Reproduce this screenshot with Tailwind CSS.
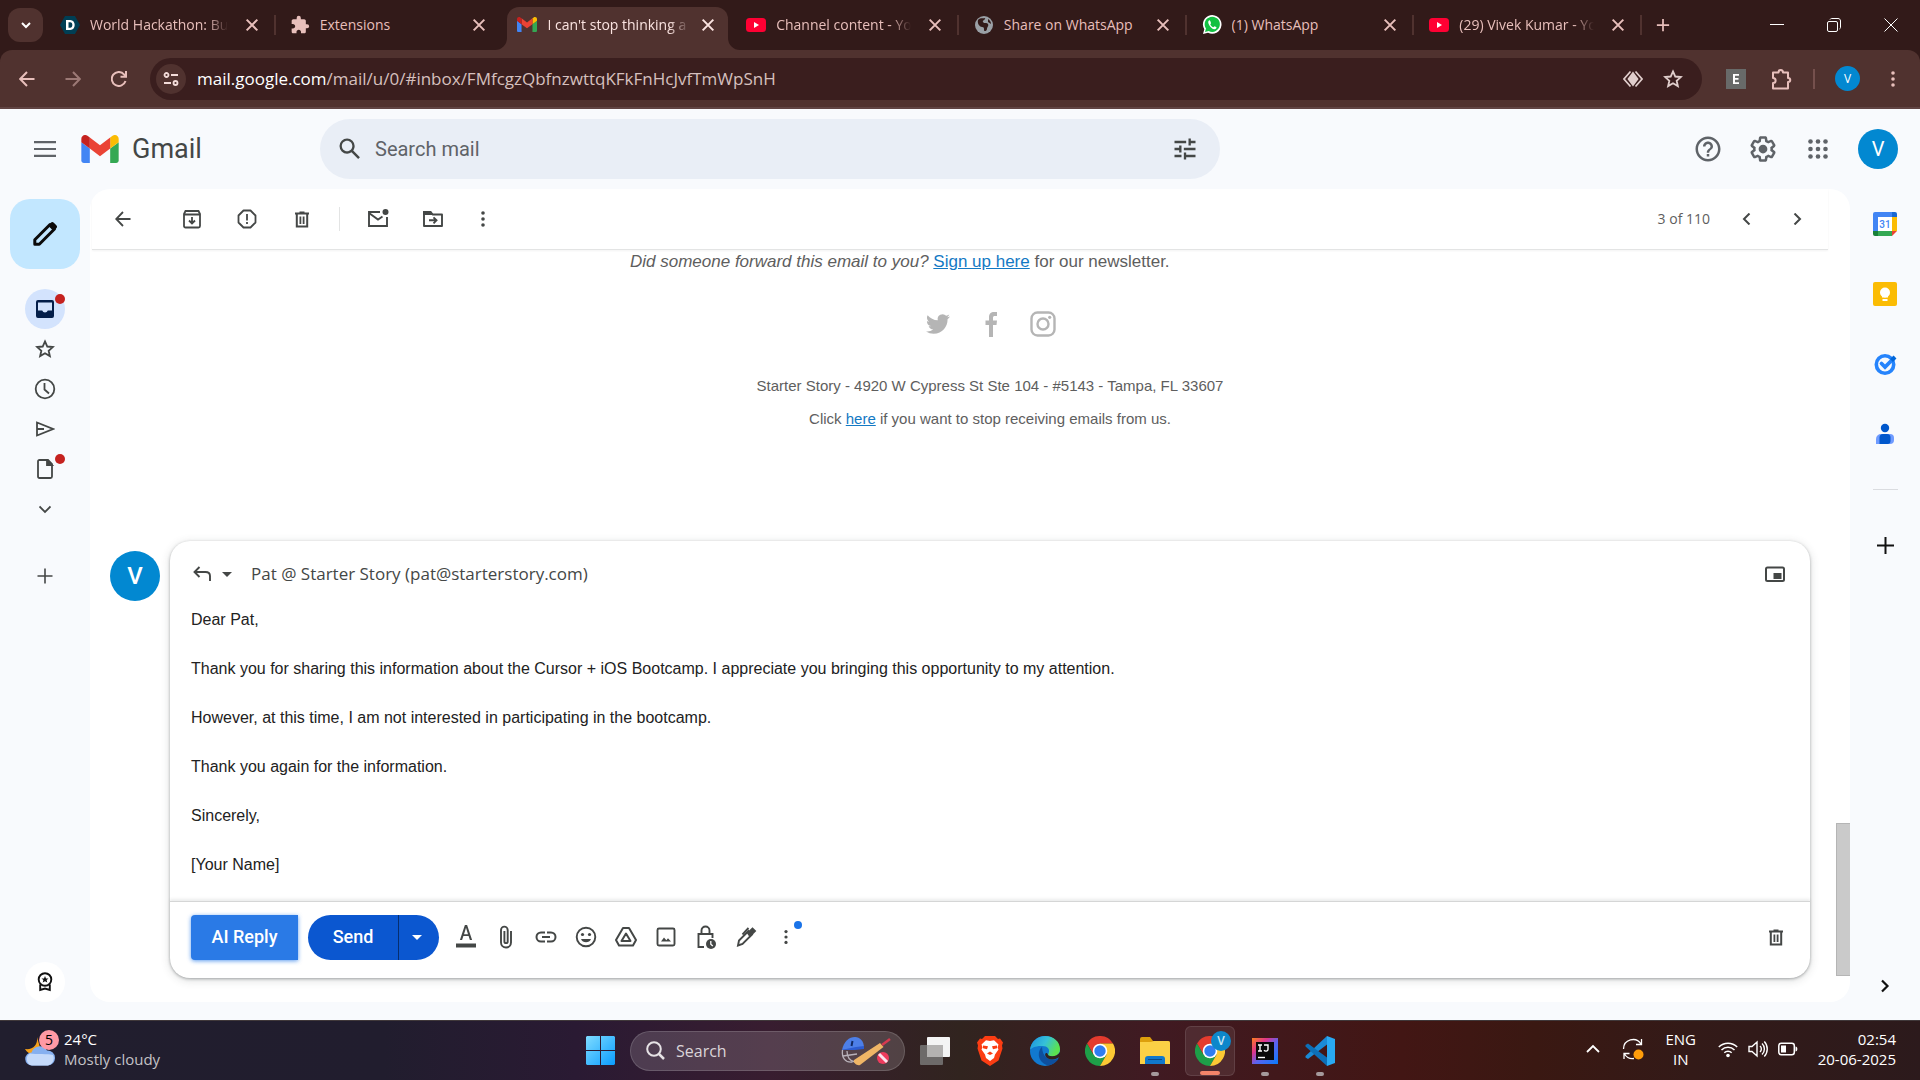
<!DOCTYPE html>
<html lang="en">
<head>
  <meta charset="UTF-8" />
  <title>I can't stop thinking about this - Gmail</title>
  <meta name="viewport" content="width=device-width, initial-scale=1.0" />
  <script src="https://cdn.jsdelivr.net/npm/@tailwindcss/browser@4"></script>
</head>
<body class="min-h-screen flex flex-col bg-[#f8fafd] font-['Open_Sans',sans-serif] overflow-x-hidden">

  <!-- Shared icons -->
  <svg class="hidden">
    <symbol id="i-close" viewBox="0 0 12 12"><path d="M2 2l8 8M10 2l-8 8" stroke="currentColor" stroke-width="1.5" fill="none" /></symbol>
    <symbol id="i-youtube" viewBox="0 0 20 20"><rect y="3" width="20" height="14" rx="3.5" fill="#ff0033" /><path d="M8 7v6l5-3z" fill="#fff" /></symbol>
    <symbol id="i-gmail" viewBox="52 42 88 66">
      <path fill="#4285f4" d="M58 108h14V74L52 59v43c0 3.32 2.69 6 6 6" />
      <path fill="#34a853" d="M120 108h14c3.32 0 6-2.69 6-6V59l-20 15" />
      <path fill="#fbbc04" d="M120 48v26l20-15v-8c0-7.42-8.47-11.65-14.4-7.2" />
      <path fill="#ea4335" d="M72 74V48l24 18 24-18v26L96 92" />
      <path fill="#c5221f" d="M52 51v8l20 15V48l-5.6-4.2c-5.94-4.45-14.4-.22-14.4 7.2" />
    </symbol>
    <symbol id="i-trash" viewBox="0 0 20 20">
      <path d="M3 4.5h14M7.5 3.5h5" stroke="currentColor" stroke-width="2" fill="none" />
      <path d="M4.8 5v12.5h10.4V5" stroke="currentColor" stroke-width="2" fill="none" />
      <path d="M8.4 7.5v7.5M11.6 7.5v7.5" stroke="currentColor" stroke-width="1.8" />
    </symbol>
    <symbol id="i-more" viewBox="0 0 20 20"><circle cx="10" cy="4" r="1.8" /><circle cx="10" cy="10" r="1.8" /><circle cx="10" cy="16" r="1.8" /></symbol>
    <symbol id="i-star" viewBox="0 0 24 24"><path d="M12 3.8l2.5 5.5 6 .6-4.500 4 1.300 5.900L12 16.700l-5.300 3.100L8 13.900l-4.500-4 6-.6z" fill="none" stroke="currentColor" stroke-width="2" /></symbol>
    <symbol id="i-chrome" viewBox="0 0 30 30">
      <path d="M2 7.500L8.500 18.700 15 7.500H28A15 15 0 0 0 2 7.500z" fill="#e33b2e" />
      <path d="M2 7.500A15 15 0 0 0 15 30l6.500-11.300H8.500z" fill="#1e9e48" />
      <path d="M28 7.500H15l6.500 11.200L15 30A15 15 0 0 0 28 7.500z" fill="#fcc934" />
      <circle cx="15" cy="15" r="7.300" fill="#fff" />
      <circle cx="15" cy="15" r="5.700" fill="#2f7df0" />
    </symbol>
  </svg>

  <!-- Tab strip -->
  <div class="h-[50px] flex items-center bg-[#321a19] text-[#e8bfbb] text-sm pl-2">
    <button aria-label="Search tabs" class="w-[35px] h-[34px] mr-[5px] rounded-xl bg-[#50322f] flex items-center justify-center shrink-0">
      <svg class="w-3 h-3" viewBox="0 0 12 12"><path d="M2 4l4 4 4-4" stroke="#fff" stroke-width="2" fill="none" /></svg>
    </button>
    <div class="grid grid-cols-7 flex-1 min-w-0 max-w-[1594px] h-full">
      <div class="min-w-0 flex items-center pl-3 relative">
        <svg class="w-5 h-5 shrink-0" viewBox="0 0 20 20"><path d="M5 1h10l5 9-5 9H5l-5-9z" fill="#003e54" /><path d="M6 5h4.200c6 0 6 10 0 10H6zM8.500 7.200v5.600h1.700c2.900 0 2.900-5.600 0-5.600z" fill="#fff" fill-rule="evenodd" /></svg>
        <span class="flex-1 min-w-0 ml-[10px] overflow-hidden whitespace-nowrap mask-r-from-85%">World Hackathon: Bui</span>
        <button aria-label="Close tab" class="mx-4 shrink-0"><svg class="w-4 h-4"><use href="#i-close" /></svg></button>
        <span class="absolute right-0 w-[2px] h-5 bg-[#50322f]"></span>
      </div>
      <div class="min-w-0 flex items-center pl-[14px] relative">
        <svg class="w-5 h-5 shrink-0" viewBox="0 0 24 24" fill="currentColor"><path d="M20.500 11H19V7c0-1.100-.9-2-2-2h-4V3.500a2.500 2.500 0 0 0-5 0V5H4c-1.100 0-2 .9-2 2v3.800h1.500c1.500 0 2.700 1.200 2.700 2.700S5 16.200 3.500 16.200H2V20c0 1.100.9 2 2 2h3.800v-1.500c0-1.500 1.200-2.700 2.700-2.700s2.700 1.200 2.700 2.700V22H17c1.100 0 2-.9 2-2v-4h1.500a2.500 2.500 0 0 0 0-5z" /></svg>
        <span class="flex-1 min-w-0 ml-[10px] overflow-hidden whitespace-nowrap">Extensions</span>
        <button aria-label="Close tab" class="mx-4 shrink-0"><svg class="w-4 h-4"><use href="#i-close" /></svg></button>
      </div>
      <div class="min-w-0 flex items-end pl-1 pr-[3px] h-full">
        <div class="relative h-[43px] w-full flex items-center pl-[10px] pb-2 rounded-t-xl bg-[#50322f] text-[#fbe4e1]">
          <svg class="absolute -left-3 bottom-0 w-3 h-3" viewBox="0 0 12 12"><path d="M12 0v12H0A12 12 0 0 0 12 0z" fill="#50322f" /></svg>
          <svg class="absolute -right-3 bottom-0 w-3 h-3" viewBox="0 0 12 12"><path d="M0 0v12h12A12 12 0 0 1 0 0z" fill="#50322f" /></svg>
          <svg class="w-5 h-[15px] shrink-0"><use href="#i-gmail" /></svg>
          <span class="flex-1 min-w-0 ml-[10px] overflow-hidden whitespace-nowrap mask-r-from-85%">I can't stop thinking a</span>
          <button aria-label="Close tab" class="ml-[10px] mr-3 shrink-0"><svg class="w-4 h-4"><use href="#i-close" /></svg></button>
        </div>
      </div>
      <div class="min-w-0 flex items-center pl-[15px] relative">
        <svg class="w-5 h-5 shrink-0"><use href="#i-youtube" /></svg>
        <span class="flex-1 min-w-0 ml-[10px] overflow-hidden whitespace-nowrap mask-r-from-85%">Channel content - Yo</span>
        <button aria-label="Close tab" class="mx-4 shrink-0"><svg class="w-4 h-4"><use href="#i-close" /></svg></button>
        <span class="absolute right-0 w-[2px] h-5 bg-[#50322f]"></span>
      </div>
      <div class="min-w-0 flex items-center pl-[15px] relative">
        <svg class="w-5 h-5 shrink-0" viewBox="0 0 20 20"><circle cx="10" cy="10" r="9" fill="#9aa0a6" /><path d="M4 5c3-3 5-1 7-2 1 2-3 2-2 4s4 0 5 2-1 3-1 5-3 3-3 1 0-3-2-3-5-3-4-7z" fill="#321a19" /><path d="M14 4c2 1 3 3 3 5l-3-2z" fill="#321a19" /></svg>
        <span class="flex-1 min-w-0 ml-[10px] overflow-hidden whitespace-nowrap">Share on WhatsApp</span>
        <button aria-label="Close tab" class="mx-4 shrink-0"><svg class="w-4 h-4"><use href="#i-close" /></svg></button>
        <span class="absolute right-0 w-[2px] h-5 bg-[#50322f]"></span>
      </div>
      <div class="min-w-0 flex items-center pl-[15px] relative">
        <svg class="w-5 h-5 shrink-0" viewBox="0 0 20 20"><path d="M1 19l1.300-4.700A9.300 9.300 0 1 1 6 17.700z" fill="#fff" /><path d="M3 17l1-3.400A7.600 7.600 0 1 1 6.700 16z" fill="#12c142" /><path d="M7 5.500c-2.500 1.500 1.500 8.500 5.500 8.800 1.500 0 2.600-1.600 1.700-2.200l-1.700-.9-1.200 1c-1.500-.4-2.700-1.900-3-2.900l.8-1.100-.8-2.200c-.3-.6-.9-.8-1.300-.5z" fill="#fff" /></svg>
        <span class="flex-1 min-w-0 ml-[10px] overflow-hidden whitespace-nowrap">(1) WhatsApp</span>
        <button aria-label="Close tab" class="mx-4 shrink-0"><svg class="w-4 h-4"><use href="#i-close" /></svg></button>
        <span class="absolute right-0 w-[2px] h-5 bg-[#50322f]"></span>
      </div>
      <div class="min-w-0 flex items-center pl-[15px] relative">
        <svg class="w-5 h-5 shrink-0"><use href="#i-youtube" /></svg>
        <span class="flex-1 min-w-0 ml-[10px] overflow-hidden whitespace-nowrap mask-r-from-85%">(29) Vivek Kumar - Yo</span>
        <button aria-label="Close tab" class="mx-4 shrink-0"><svg class="w-4 h-4"><use href="#i-close" /></svg></button>
        <span class="absolute right-0 w-[2px] h-5 bg-[#50322f]"></span>
      </div>
    </div>
    <button aria-label="New tab" class="w-[42px] flex justify-center shrink-0"><svg class="w-[14px] h-[14px]" viewBox="0 0 16 16"><path d="M8 1v14M1 8h14" stroke="currentColor" stroke-width="2" /></svg></button>
    <div class="ml-auto pr-[1px] flex shrink-0 h-full text-white">
      <button aria-label="Minimize" class="w-[57px] flex items-center justify-center"><svg class="w-[14px] h-[14px]" viewBox="0 0 14 14"><path d="M0 6.500h14" stroke="currentColor" /></svg></button>
      <button aria-label="Restore" class="w-[57px] flex items-center justify-center"><svg class="w-[14px] h-[14px]" viewBox="0 0 14 14" fill="none" stroke="currentColor"><rect x=".5" y="3.500" width="10" height="10" rx="1.500" /><path d="M3 1.500C3.300.9 4 .5 4.500.5h6.500c1.500 0 2.500 1 2.500 2.500v6.500c0 .6-.4 1.200-1 1.500" /></svg></button>
      <button aria-label="Close window" class="w-[57px] flex items-center justify-center"><svg class="w-[14px] h-[14px]" viewBox="0 0 14 14"><path d="M.5.5l13 13M13.500.5l-13 13" stroke="currentColor" /></svg></button>
    </div>
  </div>

  <!-- Address bar -->
  <div class="bg-[#321a19]">
    <div class="h-[59px] flex items-center rounded-t-xl bg-[#50322f] border-b-2 border-[#604443] pl-1 pr-[5px] text-[#e8bfbb]">
      <button aria-label="Back" class="w-[46px] flex justify-center"><svg class="w-4 h-4" viewBox="0 0 16 16" fill="none" stroke="currentColor" stroke-width="2"><path d="M15.500 8H1.500M8 1L1.200 8 8 15" /></svg></button>
      <button aria-label="Forward" class="w-[46px] flex justify-center opacity-50"><svg class="w-4 h-4" viewBox="0 0 16 16" fill="none" stroke="currentColor" stroke-width="2"><path d="M.5 8h14M8 1l6.800 7L8 15" /></svg></button>
      <button aria-label="Reload" class="w-[46px] flex justify-center"><svg class="w-4 h-4" viewBox="0 0 16 16" fill="none" stroke="currentColor" stroke-width="2"><path d="M14.500 10A7 7 0 1 1 13 3.300L15 5.500M15 0v5.800H9.500" /></svg></button>
      <div class="flex-1 min-w-0 h-[42px] ml-2 mr-[11px] pl-[6px] pr-[18px] rounded-full bg-[#3a1e1e] flex items-center">
        <button aria-label="View site information" class="w-[30px] h-[30px] rounded-full bg-[#50322f] flex items-center justify-center shrink-0">
          <svg class="w-4 h-4" viewBox="0 0 16 16" fill="none" stroke="#f3dcd9" stroke-width="1.800"><circle cx="3.500" cy="4" r="2" /><path d="M8 4h7M1 12h7" /><circle cx="12.500" cy="12" r="2" /></svg>
        </button>
        <div class="ml-[11px] flex-1 min-w-0 text-[17px] whitespace-nowrap overflow-hidden text-[#d6c0be]"><span class="text-white">mail.google.com</span>/mail/u/0/#inbox/FMfcgzQbfnzwttqKFkFnHcJvfTmWpSnH</div>
        <button aria-label="Page tools" class="mr-[19px]"><svg class="w-5 h-5" viewBox="0 0 20 20" fill="none" stroke="#e0cecc" stroke-width="1.700"><path d="M7.500 2.500L1 10l6.500 7.500M12.500 2.500L19 10l-6.500 7.500" /><path d="M10 4l4.500 6-4.500 6-4.500-6z" fill="#e0cecc" /></svg></button>
        <button aria-label="Bookmark this tab" class="text-[#e0cecc]"><svg class="w-[22px] h-[22px]"><use href="#i-star" /></svg></button>
      </div>
      <button aria-label="E extension" class="w-[45px] flex justify-center"><svg class="w-5 h-5" viewBox="0 0 20 20"><rect width="20" height="20" fill="#686a69" /><path d="M7 5h6v1.700H9v2.300h3.500v1.700H9v2.600h4V15H7z" fill="#fff" /></svg></button>
      <button aria-label="Extensions" class="w-[45px] flex justify-center"><svg class="w-6 h-6" viewBox="0 0 24 24" fill="none" stroke="currentColor" stroke-width="2"><path d="M4 5.500h5.500c0-3.500 4.500-3.500 4.500 0h5v5.500c3 0 3 4 0 4v6.500H4v-5.500c3.500 0 3.500-5 0-5z" stroke-linejoin="round" /></svg></button>
      <span class="w-[2px] h-5 mx-[10px] bg-[#75504d]"></span>
      <button aria-label="Profile" class="mx-[10px] w-[25px] h-[25px] rounded-full bg-[#0288d1] text-white text-xs flex items-center justify-center">V</button>
      <button aria-label="Chrome menu" class="w-[45px] flex justify-center"><svg class="w-5 h-5" fill="currentColor"><use href="#i-more" /></svg></button>
    </div>
  </div>

  <!-- Gmail header -->
  <header class="h-20 flex items-center pl-[33px] pr-[22px] font-[Roboto,sans-serif] text-[#5f6368]">
    <button aria-label="Main menu"><svg class="w-6 h-6" viewBox="0 0 24 24" fill="currentColor"><path d="M1 20h22v-2.200H1zM1 13.100h22v-2.200H1zM1 4v2.200h22V4z" /></svg></button>
    <a href="#inbox" class="ml-6 w-[239px] flex items-center">
      <svg class="w-[38px] h-7"><use href="#i-gmail" /></svg>
      <span class="ml-[13px] text-[27px] leading-8 text-[#444746]">Gmail</span>
    </a>
    <form class="w-[900px] min-w-0 h-[60px] rounded-full bg-[#e9eef6] flex items-center pl-4 pr-[21px]">
      <button type="button" aria-label="Search" class="text-[#444746]"><svg class="w-[28px] h-[28px]" viewBox="0 0 24 24" fill="currentColor"><path d="M20.490 19l-5.730-5.730C15.530 12.200 16 10.910 16 9.500A6.500 6.500 0 1 0 9.500 16c1.410 0 2.700-.47 3.770-1.240L19 20.490 20.490 19zM5 9.500C5 7.010 7.010 5 9.500 5S14 7.010 14 9.500 11.990 14 9.500 14 5 11.990 5 9.500z" /></svg></button>
      <input type="text" aria-label="Search mail" placeholder="Search mail" class="ml-[11px] flex-1 min-w-0 bg-transparent text-xl outline-none placeholder:text-[#5f6368]" />
      <button type="button" aria-label="Search options" class="text-[#444746]"><svg class="w-[28px] h-[28px]" viewBox="0 0 24 24" fill="currentColor"><path d="M3 17v2h6v-2H3zM3 5v2h10V5H3zm10 16v-2h8v-2h-8v-2h-2v6h2zM7 9v2H3v2h4v2h2V9H7zm14 4v-2H11v2h10zm-6-4h2V7h4V5h-4V3h-2v6z" /></svg></button>
    </form>
    <div class="ml-auto flex items-center">
      <button aria-label="Support" class="w-[55px] flex justify-center"><svg class="w-[30px] h-[30px]" viewBox="0 0 24 24" fill="currentColor"><path d="M11 18h2v-2h-2v2zm1-16C6.480 2 2 6.480 2 12s4.480 10 10 10 10-4.480 10-10S17.520 2 12 2zm0 18c-4.410 0-8-3.590-8-8s3.590-8 8-8 8 3.590 8 8-3.590 8-8 8zm0-14c-2.210 0-4 1.790-4 4h2c0-1.100.9-2 2-2s2 .9 2 2c0 2-3 1.750-3 5h2c0-2.250 3-2.500 3-5 0-2.210-1.790-4-4-4z" /></svg></button>
      <button aria-label="Settings" class="w-[55px] flex justify-center"><svg class="w-[30px] h-[30px]" viewBox="0 0 24 24" fill="currentColor"><path d="M13.850 22.250h-3.700c-.74 0-1.360-.54-1.450-1.270l-.27-1.890c-.27-.14-.53-.29-.79-.46l-1.800.72c-.7.26-1.470-.03-1.810-.65L2.200 15.530c-.35-.66-.2-1.440.36-1.880l1.530-1.190c-.01-.15-.02-.3-.02-.46 0-.15.01-.31.02-.46l-1.520-1.190c-.59-.45-.74-1.260-.37-1.880l1.850-3.190c.34-.62 1.110-.9 1.790-.63l1.810.73c.26-.17.52-.32.78-.46l.27-1.910c.09-.7.71-1.250 1.440-1.250h3.700c.74 0 1.360.54 1.450 1.270l.27 1.890c.27.14.53.29.79.46l1.800-.72c.71-.26 1.480.03 1.820.65l1.840 3.180c.36.66.2 1.440-.36 1.880l-1.520 1.190c.01.15.02.3.02.46s-.01.31-.02.46l1.520 1.190c.56.45.72 1.230.37 1.860l-1.860 3.220c-.34.62-1.110.9-1.800.63l-1.800-.72c-.26.17-.52.32-.78.46l-.27 1.910c-.1.680-.72 1.220-1.460 1.220zm-3.230-2h2.760l.37-2.550.53-.22c.44-.18.88-.44 1.340-.78l.45-.34 2.380.96 1.380-2.400-2.030-1.580.07-.56c.03-.26.06-.51.06-.78s-.03-.53-.06-.78l-.07-.56 2.030-1.580-1.390-2.400-2.390.96-.45-.35c-.42-.32-.87-.58-1.330-.77l-.52-.22-.37-2.550h-2.760l-.37 2.550-.53.21c-.44.19-.88.44-1.340.79l-.45.33-2.380-.95-1.390 2.390 2.030 1.580-.07.56a7 7 0 0 0-.06.79c0 .26.02.53.06.78l.07.56-2.030 1.580 1.380 2.400 2.390-.96.45.35c.43.33.86.58 1.330.77l.53.22.38 2.550z" /><circle cx="12" cy="12" r="3.500" /></svg></button>
      <button aria-label="Google apps" class="w-[55px] flex justify-center"><svg class="w-[20px] h-[20px]" viewBox="0 0 20 20" fill="currentColor"><circle cx="2.500" cy="2.500" r="2.300" /><circle cx="10" cy="2.500" r="2.300" /><circle cx="17.500" cy="2.500" r="2.300" /><circle cx="2.500" cy="10" r="2.300" /><circle cx="10" cy="10" r="2.300" /><circle cx="17.500" cy="10" r="2.300" /><circle cx="2.500" cy="17.500" r="2.300" /><circle cx="10" cy="17.500" r="2.300" /><circle cx="17.500" cy="17.500" r="2.300" /></svg></button>
      <button aria-label="Google Account" class="ml-[13px] w-10 h-10 rounded-full bg-[#0288d1] text-white text-xl flex items-center justify-center">V</button>
    </div>
  </header>

  <div class="flex-1 flex pb-[18px]">
    <!-- Left rail -->
    <nav class="w-[90px] shrink-0 flex flex-col items-center pt-[10px] text-[#444746]">
      <button aria-label="Compose" class="w-[70px] h-[70px] rounded-[20px] bg-[#c2e7ff] flex items-center justify-center">
        <svg class="w-[26px] h-[26px]" viewBox="0 0 26 26" fill="none" stroke="#0b0b0b" stroke-width="3"><path d="M2.800 23.200v-4.500L18 3.500l4.500 4.500L7.300 23.200z" stroke-linejoin="round" /><path d="M16 4.500l2.800-2.800c1-1 2-1 3 0l2.500 2.500c1 1 1 2 0 3L21.500 10z" fill="#0b0b0b" stroke="none" /></svg>
      </button>
      <a href="#inbox" aria-label="Inbox" class="relative mt-5 w-10 h-10 rounded-full bg-[#d3e3fd] flex items-center justify-center">
        <svg class="w-5 h-5" viewBox="0 0 20 20"><path d="M3 1h14a2 2 0 0 1 2 2v14a2 2 0 0 1-2 2H3a2 2 0 0 1-2-2V3a2 2 0 0 1 2-2zm0 2.500v8h4.200a3 3 0 0 0 5.600 0H17v-8z" fill="#041e49" fill-rule="evenodd" /></svg>
        <span class="absolute right-0 top-[5px] w-[10px] h-[10px] rounded-full bg-[#c5221f]"></span>
      </a>
      <a href="#starred" aria-label="Starred" class="w-10 h-10 flex items-center justify-center"><svg class="w-[22px] h-[22px]"><use href="#i-star" /></svg></a>
      <a href="#snoozed" aria-label="Snoozed" class="w-10 h-10 flex items-center justify-center"><svg class="w-[22px] h-[22px]" viewBox="0 0 22 22" fill="none" stroke="currentColor" stroke-width="1.800"><circle cx="11" cy="11" r="9.300" /><path d="M10.500 5v6.500l4.500 4" /></svg></a>
      <a href="#sent" aria-label="Sent" class="w-10 h-10 flex items-center justify-center"><svg class="w-5 h-5" viewBox="0 0 20 20" fill="none" stroke="currentColor" stroke-width="1.800"><path d="M2 3.500v13L18 10zM2 10h7" /></svg></a>
      <a href="#drafts" aria-label="Drafts" class="relative w-10 h-10 flex items-center justify-center"><svg class="w-5 h-5" viewBox="0 0 20 20" fill="none" stroke="currentColor" stroke-width="1.800"><path d="M4.500 1h8.500l4 4v12.500c0 1-.5 1.500-1.500 1.500h-11C3.500 19 3 18.500 3 17.500v-15C3 1.500 3.500 1 4.500 1z" /><path d="M12 1v5h5z" fill="currentColor" /></svg>
        <span class="absolute right-0 top-[5px] w-[10px] h-[10px] rounded-full bg-[#c5221f]"></span>
      </a>
      <button aria-label="More" class="w-10 h-10 flex items-center justify-center"><svg class="w-3 h-3" viewBox="0 0 12 12"><path d="M0.500 3.500L6 9l5.500-5.500" fill="none" stroke="currentColor" stroke-width="1.800" /></svg></button>
      <button aria-label="Create label" class="mt-[27px] w-10 h-10 flex items-center justify-center"><svg class="w-4 h-4" viewBox="0 0 16 16"><path d="M8 .5v15M.5 8h15" stroke="currentColor" stroke-width="1.600" /></svg></button>
      <button aria-label="Achievements" class="mt-auto w-10 h-10 rounded-full bg-white flex items-center justify-center"><svg class="w-5 h-5" viewBox="0 0 20 20" fill="none" stroke="#111" stroke-width="1.900"><circle cx="10" cy="7.500" r="6.300" /><path d="M5.200 12.500V18l4.800-1.500 4.800 1.500v-5.500" /><path d="M10 4l1 2.400 2.500.1-1.900 1.600.7 2.500-2.300-1.400-2.300 1.400.7-2.500-1.900-1.600 2.500-.1z" fill="#111" stroke="none" /></svg></button>
    </nav>

    <!-- Message card -->
    <main class="flex-1 min-w-0 rounded-[20px] bg-white flex flex-col overflow-hidden text-[#444746]">
      <div class="h-[61px] ml-[2px] mr-[22px] pl-2 pr-[6px] flex items-center border-b border-[#e3e4e4] shadow-xs">
        <button aria-label="Back to Inbox" class="w-[46px] flex justify-center"><svg class="w-4 h-4" viewBox="0 0 16 16" fill="none" stroke="currentColor" stroke-width="1.800"><path d="M15.500 8H1.500M8 1L1.200 8 8 15" /></svg></button>
        <div class="ml-[18px] flex items-center">
          <button aria-label="Archive" class="w-[55px] flex justify-center"><svg class="w-5 h-5" viewBox="0 0 20 20" fill="none" stroke="currentColor" stroke-width="1.800"><path d="M2 5l1.500-3h13L18 5v12a1.500 1.500 0 0 1-1.500 1.500h-13A1.500 1.500 0 0 1 2 17zM2 5.500h16" /><path d="M10 8v6M7 11.500l3 3 3-3" /></svg></button>
          <button aria-label="Report spam" class="w-[55px] flex justify-center"><svg class="w-5 h-5" viewBox="0 0 20 20" fill="none" stroke="currentColor" stroke-width="1.800"><path d="M6.500 1.500h7l5 5v7l-5 5h-7l-5-5v-7z" stroke-linejoin="round" /><path d="M10 5v6.500M10 13v2" /></svg></button>
          <button aria-label="Delete" class="w-[55px] flex justify-center"><svg class="w-5 h-5"><use href="#i-trash" /></svg></button>
          <span class="mx-[10px] w-px h-6 bg-[#e3e4e4]"></span>
          <button aria-label="Mark as unread" class="w-[55px] flex justify-center"><svg class="w-[22px] h-5" viewBox="0 0 22 20" fill="none" stroke="currentColor" stroke-width="1.900"><path d="M13 3H2v14h18V8" /><path d="M2 4l9 6.500 4.500-3" /><circle cx="18.500" cy="3" r="3" fill="currentColor" stroke="none" /></svg></button>
          <button aria-label="Move to" class="w-[55px] flex justify-center"><svg class="w-[22px] h-5" viewBox="0 0 22 20" fill="none" stroke="currentColor" stroke-width="1.900"><path d="M2 3h6.500l2 2.500H20V17H2z" stroke-linejoin="round" /><path d="M2 3h6.500l1.500 2H2z" fill="currentColor" /><path d="M7 11.300h7M11.500 8.300l3 3-3 3" /></svg></button>
          <button aria-label="More options" class="w-[45px] flex justify-center"><svg class="w-5 h-5" fill="currentColor"><use href="#i-more" /></svg></button>
        </div>
        <div class="ml-auto flex items-center text-sm text-[#5e5e5e]">
          <span class="mr-3">3 of 110</span>
          <button aria-label="Newer" class="w-[50px] flex justify-center"><svg class="w-3 h-3" viewBox="0 0 12 12"><path d="M8.500.5L3 6l5.500 5.500" fill="none" stroke="#444746" stroke-width="2" /></svg></button>
          <button aria-label="Older" class="w-[50px] flex justify-center"><svg class="w-3 h-3" viewBox="0 0 12 12"><path d="M3.500.5L9 6l-5.500 5.500" fill="none" stroke="#444746" stroke-width="2" /></svg></button>
        </div>
      </div>

      <div class="flex-1 flex">
        <div class="flex-1 min-w-0 pl-5 pr-[26px] pb-6 flex flex-col">
          <!-- Newsletter footer -->
          <div class="pl-[60px] pr-0 flex-1 font-['Liberation_Sans',sans-serif] text-[15px] text-[#5e5e5e]">
            <div class="w-[730px] mx-auto">
              <p class="pl-[5px] text-[17px] leading-6"><em>Did someone forward this email to you?</em> <a href="#signup" class="underline text-[#1379c4]">Sign up here</a> for our newsletter.</p>
              <div class="mt-[36px] flex justify-center gap-[25px] h-[28px] items-center text-[#b5b5b5]">
                <a href="#twitter" aria-label="Twitter"><svg class="w-[28px] h-[24px]" viewBox="0 0 24 24" fill="currentColor"><path d="M23.953 4.570a10 10 0 01-2.825.775 4.958 4.958 0 002.163-2.723c-.951.555-2.005.959-3.127 1.184a4.920 4.920 0 00-8.384 4.482C7.690 8.095 4.067 6.130 1.640 3.162a4.822 4.822 0 00-.666 2.475c0 1.710.87 3.213 2.188 4.096a4.904 4.904 0 01-2.228-.616v.06a4.923 4.923 0 003.946 4.827 4.996 4.996 0 01-2.212.085 4.936 4.936 0 004.604 3.417 9.867 9.867 0 01-6.102 2.105c-.39 0-.779-.023-1.170-.067a13.995 13.995 0 007.557 2.209c9.053 0 13.998-7.496 13.998-13.985 0-.21 0-.42-.015-.63A9.935 9.935 0 0024 4.590z" /></svg></a>
                <a href="#facebook" aria-label="Facebook"><svg class="w-[28px] h-[26px]" viewBox="0 0 26 26" fill="currentColor"><path d="M11 26V14H7.500v-4.500H11V6.500C11 2.500 13 1 16 1h3v4h-2c-1.500 0-2 .5-2 2v2.500h4l-.5 4.500H15v12z" /></svg></a>
                <a href="#instagram" aria-label="Instagram"><svg class="w-[26px] h-[26px]" viewBox="0 0 26 26" fill="none" stroke="currentColor" stroke-width="2.400"><rect x="1.500" y="1.500" width="23" height="23" rx="6" /><circle cx="13" cy="13" r="5.500" /><circle cx="19.700" cy="6.300" r="1.600" fill="currentColor" stroke="none" /></svg></a>
              </div>
              <p class="mt-[31px] leading-[33px] text-center">Starter Story - 4920 W Cypress St Ste 104 - #5143 - Tampa, FL 33607</p>
              <p class="leading-[33px] text-center">Click <a href="#unsubscribe" class="underline text-[#1379c4]">here</a> if you want to stop receiving emails from us.</p>
            </div>
          </div>

          <!-- Reply -->
          <div class="flex items-start gap-[10px]">
            <div class="mt-[10px] w-[50px] h-[50px] rounded-full bg-[#0288d1] text-white text-2xl font-medium font-[Roboto,sans-serif] flex items-center justify-center shrink-0">V</div>
            <div class="flex-1 min-w-0 rounded-[20px] bg-white shadow-[0_1px_3px_rgba(60,64,67,0.4),0_2px_8px_1px_rgba(60,64,67,0.15)] flex flex-col">
              <div class="h-[54px] pt-3 px-[22px] flex items-center">
                <button aria-label="Type of response" class="flex items-center gap-[10px]">
                  <svg class="w-5 h-5" viewBox="0 0 20 20" fill="none" stroke="currentColor" stroke-width="1.900"><path d="M7.500 3L2.500 8l5 5M2.500 8h11c3 0 4.500 1.500 4.500 4v5" /></svg>
                  <svg class="w-[10px] h-[5px]" viewBox="0 0 10 5"><path d="M0 0h10L5 5z" fill="#444746" /></svg>
                </button>
                <span class="ml-[19px] text-[17px] text-[#444746]">Pat @ Starter Story (pat@starterstory.com)</span>
                <button aria-label="Pop out reply" class="ml-auto"><svg class="w-[26px] h-5" viewBox="0 0 26 20"><rect x="4" y="3.500" width="18" height="13.500" rx="1.500" fill="none" stroke="currentColor" stroke-width="2" /><rect x="11.500" y="9" width="8" height="6" fill="currentColor" /></svg></button>
              </div>
              <textarea aria-label="Message body" rows="6" class="px-[21px] pb-3 resize-none overflow-hidden outline-none font-['Liberation_Sans',sans-serif] text-base leading-[49px] text-[#222]">Dear Pat,
Thank you for sharing this information about the Cursor + iOS Bootcamp. I appreciate you bringing this opportunity to my attention.
However, at this time, I am not interested in participating in the bootcamp.
Thank you again for the information.
Sincerely,
[Your Name]</textarea>
              <div class="h-[77px] pl-[21px] pr-[21px] pb-[6px] flex items-center rounded-b-[20px] border-t border-[#d5d6d6] shadow-[0_-2px_3px_rgba(60,64,67,0.1)] font-[Roboto,sans-serif]">
                <button class="w-[107px] h-[45px] rounded-l-[4px] bg-[#2a7ae6] text-white text-lg font-medium shadow-[0_1px_4px_rgba(26,115,232,0.7)]">AI Reply</button>
                <div class="ml-[10px] h-[45px] flex rounded-full overflow-hidden bg-[#0b57d0] text-white shrink-0">
                  <button class="w-[91px] border-r border-[#062e6f] text-lg font-medium">Send</button>
                  <button aria-label="More send options" class="w-10 pr-1 flex items-center justify-center"><svg class="w-[10px] h-[5px]" viewBox="0 0 10 5"><path d="M0 0h10L5 5z" fill="#fff" /></svg></button>
                </div>
                <div class="ml-[7px] flex">
                  <button aria-label="Formatting options" class="w-10 flex justify-center"><svg class="w-6 h-6" viewBox="0 0 24 24" fill="currentColor"><path d="M2 18.500h20V22.500H2z" /><path d="M10.900 0h2.200l5 15h-2.200l-1.300-4H9.400l-1.300 4H5.900zM12 2.800L10 9.200h4z" /></svg></button>
                  <button aria-label="Attach files" class="w-10 flex justify-center"><svg class="w-6 h-6" viewBox="0 0 24 24" fill="none" stroke="currentColor" stroke-width="1.900"><path d="M17 6v11.500a5 5 0 0 1-10 0V5a3.300 3.300 0 0 1 6.700 0v11.500a1.600 1.600 0 0 1-3.300 0V6" /></svg></button>
                  <button aria-label="Insert link" class="w-10 flex justify-center"><svg class="w-6 h-6" viewBox="0 0 24 24" fill="none" stroke="currentColor" stroke-width="2"><path d="M11 7.500H7a4.500 4.500 0 0 0 0 9h4M13 7.500h4a4.500 4.500 0 0 1 0 9h-4M8 12h8" /></svg></button>
                  <button aria-label="Insert emoji" class="w-10 flex justify-center"><svg class="w-6 h-6" viewBox="0 0 24 24" fill="none" stroke="currentColor" stroke-width="1.900"><circle cx="12" cy="12" r="9.300" /><circle cx="8.500" cy="9.500" r="1.600" fill="currentColor" stroke="none" /><circle cx="15.500" cy="9.500" r="1.600" fill="currentColor" stroke="none" /><path d="M7 14h10c-1.500 4.300-8.500 4.300-10 0z" fill="currentColor" stroke="none" /></svg></button>
                  <button aria-label="Insert files using Drive" class="w-10 flex justify-center"><svg class="w-6 h-6" viewBox="0 0 24 24" fill="none" stroke="currentColor" stroke-width="2" stroke-linejoin="round"><path d="M9 3h6l7 12-3 5.500H5L2 15z" /><path d="M12 8.500l4.500 7.500h-9z" /></svg></button>
                  <button aria-label="Insert photo" class="w-10 flex justify-center"><svg class="w-6 h-6" viewBox="0 0 24 24" fill="none" stroke="currentColor" stroke-width="1.900"><rect x="3.500" y="3.500" width="17" height="17" rx="1.500" /><path d="M7 16.500l3-4 2.300 2.700 1.700-2 3 3.300z" fill="currentColor" stroke="none" /></svg></button>
                  <button aria-label="Confidential mode" class="w-10 flex justify-center"><svg class="w-6 h-6" viewBox="0 0 24 24" fill="none" stroke="currentColor" stroke-width="1.900"><path d="M10 22H4.500V9h14v4M7.500 9V5.500a4 4 0 0 1 8 0V9" /><circle cx="17" cy="19" r="5" fill="currentColor" stroke="none" /><path d="M16.800 16v3.200l2 1.800" stroke="#fff" stroke-width="1.300" /></svg></button>
                  <button aria-label="Insert signature" class="w-10 flex justify-center"><svg class="w-6 h-6" viewBox="0 0 24 24" fill="none" stroke="currentColor" stroke-width="1.900"><path d="M4 20.500l1-5L14.500 6l3.500 3.500-9.500 9.500z" /><path d="M14 8l4.500-4.500 2.500 2.500-5 5z" fill="currentColor" /><path d="M8.500 9.500l6-6.500" /></svg></button>
                  <button aria-label="More options" class="relative w-10 flex justify-center items-center"><svg class="w-[18px] h-5" fill="currentColor"><use href="#i-more" /></svg><span class="absolute right-1 -top-1 w-2 h-2 rounded-full bg-[#1a73e8]"></span></button>
                </div>
                <button aria-label="Discard draft" class="ml-auto mr-[3px]"><svg class="w-5 h-5"><use href="#i-trash" /></svg></button>
              </div>
            </div>
          </div>
        </div>
        <!-- Scrollbar thumb -->
        <div class="w-[14px] shrink-0 flex flex-col justify-end pb-[26px]"><div class="h-[153px] bg-[#cacaca] border border-r-0 border-[#b5b5b5]"></div></div>
      </div>
    </main>

    <!-- Side panel -->
    <aside class="w-[70px] shrink-0 flex flex-col items-center">
      <button aria-label="Calendar" class="h-[70px]"><svg class="w-6 h-6" viewBox="0 0 24 24"><rect x="4" y="4" width="15" height="15" fill="#fff" /><path d="M2 0h17v5H5v14H0V2a2 2 0 0 1 2-2z" fill="#4285f4" /><path d="M19 0h3a2 2 0 0 1 2 2v3h-5z" fill="#1967d2" /><path d="M19 5h5v14h-5z" fill="#fbbc04" /><path d="M5 19h14v5H5z" fill="#34a853" /><path d="M0 19h5v5H2a2 2 0 0 1-2-2z" fill="#188038" /><path d="M19 19h5l-5 5z" fill="#ea4335" /><text x="12" y="15.500" text-anchor="middle" font-family="Roboto" font-size="10" font-weight="500" fill="#4285f4">31</text></svg></button>
      <button aria-label="Keep" class="h-[70px]"><svg class="w-6 h-6" viewBox="0 0 24 24"><rect width="24" height="24" rx="2" fill="#fbbc04" /><circle cx="12" cy="10.500" r="5" fill="#fff" /><path d="M9 13h6v2.500H9zM9.500 17h5v2h-5z" fill="#fff" /></svg></button>
      <button aria-label="Tasks" class="h-[70px]"><svg class="w-6 h-6" viewBox="0 0 24 24" fill="none"><circle cx="12" cy="12.500" r="8.700" stroke="#2684fc" stroke-width="3.600" /><path d="M8.500 11.500l3.500 3.500 8.500-8.500" stroke="#2684fc" stroke-width="3.800" stroke-linecap="round" /><path d="M18.500 8.500l3.500-3.500" stroke="#0066da" stroke-width="4" /></svg></button>
      <button aria-label="Contacts" class="h-[70px]"><svg class="w-6 h-6" viewBox="0 0 24 24"><circle cx="12" cy="6" r="4.200" fill="#0057cc" /><path d="M8 12h9a4 4 0 0 1 4 4v2a4 4 0 0 1-4 4H3v-5a5 5 0 0 1 5-5z" fill="#6f9bff" /><path d="M10 12h4a3.500 3.500 0 0 1 3.500 3.500V19a3 3 0 0 1-3 3H6.500v-6.500A3.500 3.500 0 0 1 10 12z" fill="#0057cc" /></svg></button>
      <span class="mt-5 w-[25px] h-px bg-[#dadce0]"></span>
      <button aria-label="Get add-ons" class="mt-[47px]"><svg class="w-[17px] h-[17px]" viewBox="0 0 17 17"><path d="M8.500 0v17M0 8.500h17" stroke="#111" stroke-width="2" /></svg></button>
      <button aria-label="Hide side panel" class="mt-auto mb-[9px]"><svg class="w-3 h-[14px]" viewBox="0 0 12 14"><path d="M3 1.500L8.500 7 3 12.500" fill="none" stroke="#111" stroke-width="2.200" /></svg></button>
    </aside>
  </div>

  <!-- Taskbar -->
  <footer class="h-[60px] grid grid-cols-[1fr_auto_1fr] items-center border-t border-[#40383a] text-white text-[15px] leading-5 bg-[linear-gradient(90deg,#211e2e_0%,#211d2e_20%,#2a1a33_30%,#381d30_40%,#31241f_50%,#401a22_60%,#421614_73%,#3a1812_80%,#331a18_88%,#2c1a1c_100%)]">
    <button class="pl-[25px] pb-1 flex items-center text-left">
      <span class="relative w-[30px] h-[36px] shrink-0">
        <svg class="w-[30px] h-[36px]" viewBox="0 0 30 36"><path d="M12 6c1 8-4 13-12 12 3 6 12 7 16 2z" fill="#f7a11a" /><path d="M7 34.500a6.500 6.500 0 0 1-.5-13A8.500 8.500 0 0 1 22 19.500a7.500 7.500 0 0 1 1 15z" fill="#86b0f0" /><path d="M7 34.500A6.500 6.500 0 0 1 5 22.500c6 1 18 0 23 1.500a7.500 7.500 0 0 1-5 10.500z" fill="#c5dafa" /></svg>
        <span class="absolute left-[14px] -top-px w-5 h-5 rounded-full bg-[#ff99a4] text-black text-sm leading-5 text-center">5</span>
      </span>
      <span class="ml-[9px]"><span class="block">24°C</span><span class="block text-[#c4c2c6]">Mostly cloudy</span></span>
    </button>

    <div class="flex items-center gap-[5px] h-full">
      <button aria-label="Start" class="w-[50px] flex justify-center"><svg class="w-[29px] h-[29px]" viewBox="0 0 29 29"><defs><linearGradient id="win" x2="1" y2="1"><stop stop-color="#7fdcff" /><stop offset="1" stop-color="#0a9cff" /></linearGradient></defs><path d="M1 0h13v14H0V1zM15 0h13l1 1v13H15zM0 15h14v14H1l-1-1zM15 15h14v13l-1 1H15z" fill="url(#win)" /></svg></button>
      <button class="w-[275px] h-10 pl-[15px] pr-[13px] rounded-full bg-white/15 border border-white/15 flex items-center text-base text-[#dad4d8]">
        <svg class="w-[19px] h-[19px]" viewBox="0 0 19 19" fill="none" stroke="#e6e2e5" stroke-width="2"><circle cx="8" cy="8" r="6.800" /><path d="M13 13l5 5" stroke-width="2.500" /></svg>
        <span class="ml-[11px]">Search</span>
        <svg class="ml-auto w-[50px] h-[30px]" viewBox="0 0 50 30"><path d="M1.500 14c-1 8 3 13 10 12M2 20l14-2M6 15c0 6 3 10 8 11" fill="none" stroke="#b9b2ba" stroke-width="1.300" /><path d="M1 14C3 5 8 1 14 1c5 0 9 4 9 11l-9 1z" fill="#4d7fe8" /><path d="M0 14l15-3 8-1v3l-9 1z" fill="#2c5bd0" /><path d="M11.500 5l-1 5" stroke="#122a66" stroke-width="2" /><path d="M13 24L39 7l3.500 4L19 29c-3 1-7-2-6-5z" fill="#efb566" /><path d="M41 9l8-6" stroke="#d63a50" stroke-width="2.500" /><circle cx="42" cy="22" r="6" fill="#ee3b5d" /><path d="M38 18l8 8" stroke="#fbe3ee" stroke-width="3" /></svg>
      </button>
      <button aria-label="Task view" class="w-[50px] flex justify-center"><svg class="w-[30px] h-[28px]" viewBox="0 0 30 28"><rect x="7" width="23" height="20" rx="1" fill="#f4f4f4" /><rect y="8" width="23" height="20" rx="1" fill="#6d6a69" /><path d="M7 8h16v12H7z" fill="#b4b2b1" /></svg></button>
      <button aria-label="Brave" class="w-[50px] flex justify-center"><svg class="w-[26px] h-[30px]" viewBox="0 0 26 30"><path d="M8 0h10l3 3 2-.5 3 4-1 3 .5 3-4 12L13 30 4.500 24.500l-4-12L1 9.500 0 6.500l3-4 2 .5z" fill="#fb3d13" /><path d="M13 5l4-.8 4.500 4.300-1 3 1 2-3.500 5-1 3.500-4 3-4-3-1-3.500-3.500-5 1-2-1-3L9 4.200z" fill="#fff" /><path d="M6 9.500l5 .8-1 3-4-1zM20 9.500l-5 .8 1 3 4-1zM10 17.500l3-2 3 2-3 1.500z" fill="#fb3d13" /></svg></button>
      <button aria-label="Edge" class="w-[50px] flex justify-center"><svg class="w-[30px] h-[30px]" viewBox="0 0 30 30"><defs><linearGradient id="edge" x2="1" y2=".4"><stop stop-color="#1b8fe0" /><stop offset=".55" stop-color="#35c1d8" /><stop offset="1" stop-color="#5be24f" /></linearGradient></defs><circle cx="15" cy="15" r="15" fill="#1179cf" /><path d="M0 14C1 5 8 0 15 0c9 0 15 6 15 13 0 5-4 8-8.500 7.500-3-.3-4-1.500-3-3 2-4-1-7.500-6-7.500C6 9.500 1 12 0 14z" fill="url(#edge)" /><path d="M12 11c-5 4-5 16 7 18.500C24 28 27 25.500 29 22c-4 3-16 4-17-11z" fill="#0d4f9e" /><path d="M17 17c-3-1-3 6 5 6.500 4 0 6-1.500 8-3.500v-4c-2 4-8 5-11.500 3.500z" fill="#32231f" /></svg></button>
      <button aria-label="Chrome" class="w-[50px] flex justify-center"><svg class="w-[30px] h-[30px]"><use href="#i-chrome" /></svg></button>
      <button aria-label="File Explorer" class="relative w-[50px] h-[50px] flex items-center justify-center"><svg class="w-[30px] h-[27px]" viewBox="0 0 30 27"><path d="M0 2a2 2 0 0 1 2-2h8l3 4h15a2 2 0 0 1 2 2v3H0z" fill="#dd9f0c" /><path d="M0 5h11l3-1h14a2 2 0 0 1 2 2v21H0z" fill="#fbd045" /><path d="M5 27v-5a3 3 0 0 1 3-3h14a3 3 0 0 1 3 3v5z" fill="#1078cb" /><path d="M8 22.500h14" stroke="#0b4a86" /></svg><span class="absolute bottom-0 w-2 h-1 rounded-full bg-[#a59a9c]"></span></button>
      <button aria-label="Chrome, running" class="relative w-[50px] h-[50px] rounded-md bg-white/8 border border-white/10 flex items-center justify-center"><svg class="w-[30px] h-[30px]"><use href="#i-chrome" /></svg><span class="absolute left-[25px] top-1 w-5 h-5 rounded-full bg-[#0d87cb] text-xs leading-5 text-[#cfe9f8] font-semibold">V</span><span class="absolute bottom-0 w-5 h-1 rounded-full bg-[#f48469]"></span></button>
      <button aria-label="IntelliJ IDEA" class="relative w-[50px] h-[50px] flex items-center justify-center"><svg class="w-[26px] h-[26px]" viewBox="0 0 26 26"><defs><linearGradient id="ij" x2="1" y2="1"><stop stop-color="#fc801d" /><stop offset=".3" stop-color="#e0348b" /><stop offset=".55" stop-color="#5a63f0" /><stop offset="1" stop-color="#087cfa" /></linearGradient></defs><rect width="26" height="26" fill="url(#ij)" /><rect x="4" y="4" width="18" height="18" fill="#0a0a0a" /><path d="M6 7h4M8 7v6M6 13h4M12 7h4v4.500c0 2-3 2-4 .8" stroke="#fff" stroke-width="1.400" fill="none" /><path d="M6 19.500h7" stroke="#fff" stroke-width="1.400" /></svg><span class="absolute bottom-0 w-2 h-1 rounded-full bg-[#a59a9c]"></span></button>
      <button aria-label="Visual Studio Code" class="relative w-[50px] h-[50px] flex items-center justify-center"><svg class="w-[30px] h-[30px]" viewBox="0 0 30 30"><path d="M22 8.500L3 23 .500 21.500v-1.500L22 0z" fill="#1a8ad6" /><path d="M22 21.500L3 7.500.500 9v1.500L22 30z" fill="#0d6fb8" /><path d="M22 0l8 3v24l-8 3z" fill="#29a9f2" /></svg><span class="absolute bottom-0 w-2 h-1 rounded-full bg-[#a59a9c]"></span></button>
    </div>

    <div class="flex items-center justify-end pr-6 pb-[3px]">
      <button aria-label="Show hidden icons" class="w-10 flex justify-center"><svg class="w-[14px] h-[14px]" viewBox="0 0 14 14"><path d="M1 10l6-6 6 6" fill="none" stroke="#fff" stroke-width="1.800" /></svg></button>
      <button aria-label="Update" class="w-10 flex justify-center"><svg class="w-[22px] h-[22px]" viewBox="0 0 22 22" fill="none" stroke="#fff" stroke-width="1.300"><path d="M1.500 11A9.500 9.500 0 0 1 19 6M19.500 1v5.500H14M2 21v-5.500h5.500M2.500 16A9.500 9.500 0 0 0 12 20.500" /><circle cx="16.500" cy="16.500" r="5" fill="#ff9d0a" stroke="none" /></svg></button>
      <button class="ml-2 w-10 text-center">ENG<br />IN</button>
      <button aria-label="Network, volume and battery" class="ml-[17px] flex items-center gap-[10px]">
        <svg class="w-5 h-5" viewBox="0 0 20 20" fill="none" stroke="#fff" stroke-width="1.500"><path d="M.8 8a13 13 0 0 1 18.400 0M3.500 11a9.300 9.300 0 0 1 13 0M6.300 13.800a5.300 5.300 0 0 1 7.400 0" /><circle cx="10" cy="16.500" r="1.800" fill="#fff" stroke="none" /></svg>
        <svg class="w-5 h-5" viewBox="0 0 20 20" fill="none" stroke="#fff" stroke-width="1.400"><path d="M1 7.500v5h3L9 17V3L4 7.500zM12 7a4 4 0 0 1 0 6M14 4.500a7.500 7.500 0 0 1 0 11M16.300 2.500a11 11 0 0 1 0 15" /></svg>
        <svg class="w-5 h-5" viewBox="0 0 20 20"><rect x=".8" y="4.300" width="15.500" height="11.400" rx="2.500" fill="none" stroke="#fff" stroke-width="1.500" /><path d="M3 6.500h5v7H3zM17.500 7.500c2.500 0 2.500 5 0 5z" fill="#fff" /></svg>
      </button>
      <button class="ml-5 text-right">02:54<br />20-06-2025</button>
    </div>
  </footer>
</body>
</html>
